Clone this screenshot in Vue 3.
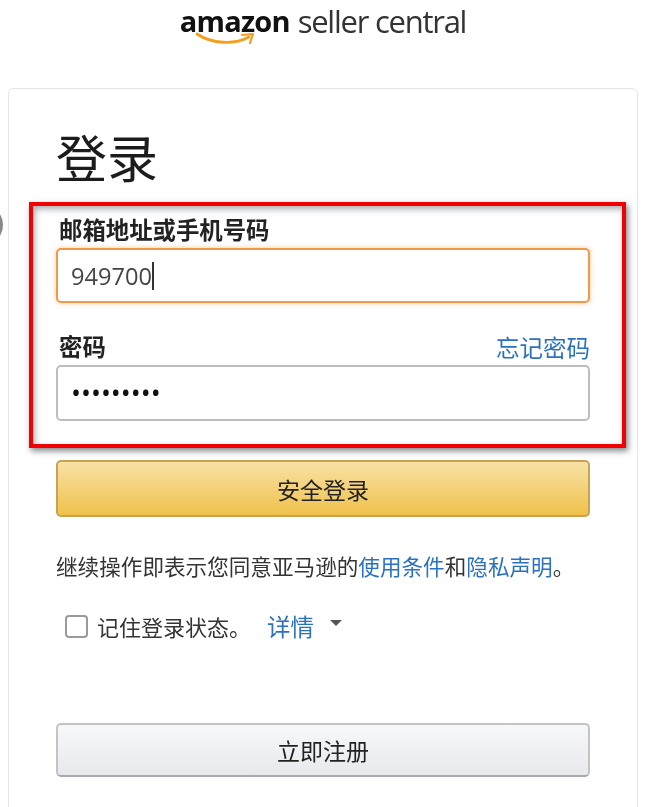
<script setup>
import { ref } from 'vue'

const account = ref('949700')
const password = ref('123456789')
const remember = ref(false)
</script>

<template>
	<div class="page">
		<span class="edge-dot"></span>
		<header class="logo">
			<span class="logo-brand">amazon</span>
			<span class="logo-name">seller central</span>
			<svg class="logo-smile" viewBox="0 0 60 14" width="60" height="14">
				<path d="M1 2 C16 12 38 13 53 5" fill="none" stroke="#f59e1e" stroke-width="2.8" stroke-linecap="round" />
				<path d="M46 3 L57 2 L54 11" fill="none" stroke="#f59e1e" stroke-width="2.2" stroke-linejoin="round" stroke-linecap="round" />
			</svg>
		</header>

		<main class="card">
			<h1>登录</h1>

			<form class="form" @submit.prevent>
				<label class="label" for="account">邮箱地址或手机号码</label>
				<div class="input-wrap">
					<input id="account" v-model="account" class="input focused" type="text" />
					<span class="caret"></span>
				</div>

				<div class="label-row">
					<label class="label" for="password">密码</label>
					<a class="link" href="#">忘记密码</a>
				</div>
				<input id="password" v-model="password" class="input secret" type="password" />

				<button class="btn btn-primary" type="submit">安全登录</button>
			</form>

			<p class="terms">继续操作即表示您同意亚马逊的<a class="link" href="#">使用条件</a>和<a class="link" href="#">隐私声明</a>。</p>

			<div class="remember">
				<label class="remember-label">
					<input v-model="remember" class="check" type="checkbox" />
					<span>记住登录状态。</span>
				</label>
				<a class="link" href="#">详情</a>
				<i class="arrow"></i>
			</div>

			<button class="btn btn-secondary" type="button">立即注册</button>

			<div class="highlight"></div>
		</main>
	</div>
</template>

<style>
html,
body {
	margin: 0;
	background: #fff;
}
</style>

<style scoped>
.page {
	position: relative;
	width: 653px;
	height: 807px;
	overflow: hidden;
	background: #fff;
	font-family: "Open Sans", "Noto Sans CJK SC", sans-serif;
	color: #222;
	filter: blur(0.6px);
}

.edge-dot {
	position: absolute;
	left: -12px;
	top: 212px;
	width: 15px;
	height: 26px;
	border-radius: 50%;
	background: #8a8a8a;
}

.logo {
	position: relative;
	height: 88px;
	display: flex;
	justify-content: center;
	align-items: flex-start;
	gap: 8px;
	padding-right: 7px;
	box-sizing: border-box;
	line-height: 42px;
	color: #222;
}

.logo-brand {
	font-size: 29px;
	font-weight: 700;
	letter-spacing: -0.8px;
	color: #111;
}

.logo-name {
	font-size: 31px;
	font-family: "Open Sans", sans-serif;
	letter-spacing: -1.25px;
	color: #333;
}

.logo-smile {
	position: absolute;
	left: 196px;
	top: 32px;
}

.card {
	position: relative;
	box-sizing: border-box;
	width: 630px;
	height: 760px;
	margin-left: 8px;
	padding: 38px 47px 0;
	border: 1px solid #e4e4e4;
	border-radius: 6px;
}

h1 {
	margin: 0;
	height: 85px;
	font-size: 51px;
	font-weight: 400;
	line-height: 62px;
	color: #1c1c1c;
}

.form {
	display: flex;
	flex-direction: column;
}

.label {
	display: block;
	padding-left: 3px;
	font-size: 23.4px;
	font-weight: 700;
	line-height: 36px;
	color: #222;
}

.label-row {
	display: flex;
	justify-content: space-between;
	align-items: center;
	margin-top: 26px;
}

.link {
	color: #2a72c0;
	text-decoration: none;
	font-size: 23.5px;
}

.input-wrap {
	position: relative;
}

.input {
	display: block;
	box-sizing: border-box;
	width: 100%;
	height: 55px;
	padding: 0 13px;
	border: 2px solid #bdbdbd;
	border-radius: 5px;
	background: #fff;
	font-family: "Open Sans", sans-serif;
	font-size: 23.6px;
	color: #444;
	outline: none;
}

.secret {
	height: 56px;
	font-size: 26.5px;
	color: #111;
}

.focused {
	border-color: #ef9a47;
	box-shadow: 0 0 5px rgba(239, 154, 71, 0.55);
}

.caret {
	position: absolute;
	left: 96px;
	top: 14px;
	width: 1.5px;
	height: 28px;
	background: #333;
}

.btn {
	display: block;
	box-sizing: border-box;
	width: 100%;
	font-family: inherit;
	font-size: 23px;
	color: #222;
	border-radius: 5px;
	padding: 0;
}

.btn-primary {
	height: 57px;
	margin-top: 39px;
	border: 2px solid #c9a355;
	background: linear-gradient(#f8e2a6, #f0c14b);
}

.btn-secondary {
	height: 54px;
	margin-top: 80px;
	border: 2px solid #c4c4c8;
	border-bottom-color: #a9a9ae;
	background: linear-gradient(#f7f8fa, #e7e9ec);
}

.terms {
	margin: 34px 0 0;
	font-size: 21.6px;
	line-height: 32px;
	color: #333;
}

.terms .link {
	font-size: inherit;
}

.remember {
	display: flex;
	align-items: center;
	height: 34px;
	margin-top: 26px;
	padding-left: 9px;
	font-size: 22px;
	color: #333;
}

.remember .link {
	margin-left: 16px;
}

.remember-label {
	display: flex;
	align-items: center;
}

.check {
	appearance: none;
	box-sizing: border-box;
	width: 23px;
	height: 23px;
	margin: 0 9px 0 0;
	border: 2px solid #9a9a9a;
	border-radius: 4px;
	background: #fff;
}

.arrow {
	width: 0;
	height: 0;
	margin: -6px 0 0 16px;
	border-left: 6px solid transparent;
	border-right: 6px solid transparent;
	border-top: 6px solid #555;
}

/* red annotation drawn over the form */
.highlight {
	position: absolute;
	left: 20px;
	top: 113px;
	width: 597px;
	height: 246px;
	box-sizing: border-box;
	border: 4px solid #f00000;
	box-shadow: 2px 3px 6px rgba(60, 70, 75, 0.65), inset 2px 3px 6px rgba(60, 70, 75, 0.45);
	pointer-events: none;
}
</style>
